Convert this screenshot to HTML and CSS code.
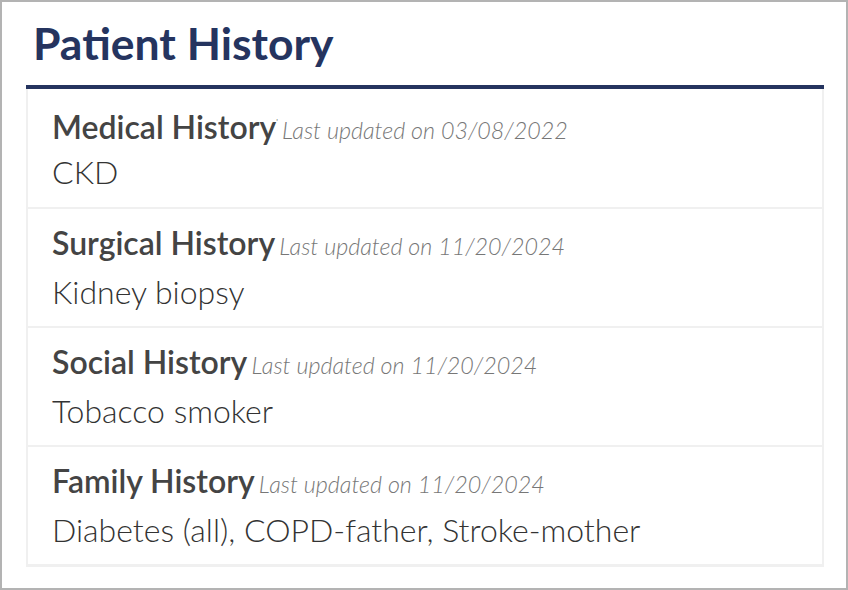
FILE: index.html
```html
<!DOCTYPE html>
<html lang="en">
<head>
  <meta charset="UTF-8" />
  <meta name="viewport" content="width=device-width, initial-scale=1.0"/>
  <title>Patient History</title>
  <link rel="stylesheet" href="styles.css">
</head>
<body>

  <main class="painel">
    <h1 class="titulo">Patient History</h1>

    <section class="lista">
      <div class="item">
        <div class="cabecalho">
          <span class="nome">Medical History</span><span class="marca">'</span>
          <span class="data">Last updated on 03/08/2022</span>
        </div>
        <div class="valor">CKD</div>
      </div>

      <div class="item">
        <div class="cabecalho">
          <span class="nome">Surgical History</span>
          <span class="data">Last updated on 11/20/2024</span>
        </div>
        <div class="valor">Kidney biopsy</div>
      </div>

      <div class="item">
        <div class="cabecalho">
          <span class="nome">Social History</span>
          <span class="data">Last updated on 11/20/2024</span>
        </div>
        <div class="valor">Tobacco smoker</div>
      </div>

      <div class="item">
        <div class="cabecalho">
          <span class="nome">Family History</span>
          <span class="data">Last updated on 11/20/2024</span>
        </div>
        <div class="valor">Diabetes (all), COPD-father, Stroke-mother</div>
      </div>
    </section>
  </main>

</body>
</html>
```

FILE: styles.css
```css
* {
  box-sizing: border-box;
  font-family: Lato, "Open Sans", sans-serif;
}

html, body {
  margin: 0;
  background-color: #fff;
}

.painel {
  width: 848px;
  height: 590px;
  border: 2px solid #b3b3b3;
  padding: 0 22px 0 24px;
}

.titulo {
  margin: 14px 0 0;
  padding: 0 0 16px 7px;
  font-size: 44.5px;
  line-height: 1.2;
  font-weight: 700;
  color: #25345f;
  border-bottom: 4px solid #25345f;
}

.lista {
  border: 2px solid #f0f0f0;
  border-top: none;
  border-bottom-width: 3px;
}

.item {
  padding: 13px 24px 12px;
  line-height: 45px;
  border-bottom: 2px solid #f0f0f0;
}

.item:first-child {
  padding-bottom: 13px;
}

.item:last-child {
  border-bottom: none;
}

.cabecalho {
  height: 41px;
  line-height: 41px;
  margin-bottom: 6px;
  white-space: nowrap;
}

.nome {
  font-size: 32px;
  font-weight: 600;
  color: #444;
}

.marca {
  font-size: 8px;
  vertical-align: 14px;
  color: #666;
}

.data {
  font-size: 23.3px;
  font-style: italic;
  font-weight: 300;
  color: #777;
}

.valor {
  font-size: 32px;
  font-weight: 300;
  color: #333;
}
```
